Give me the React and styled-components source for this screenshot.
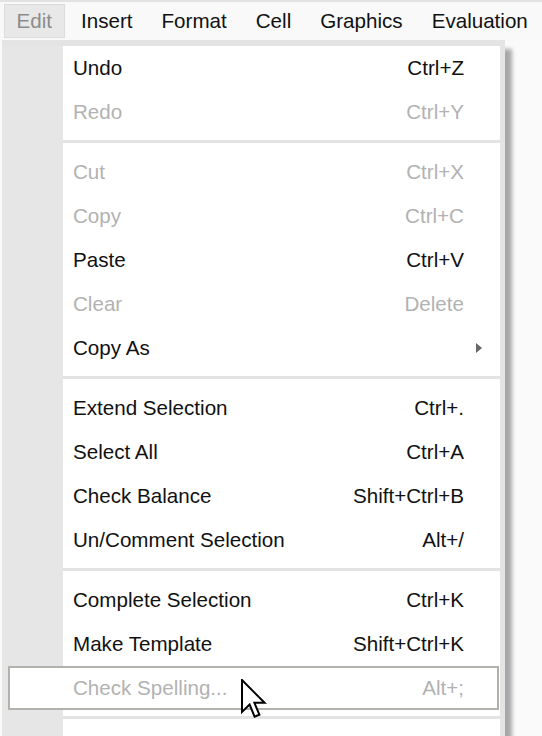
import React from "react";
import styled, { createGlobalStyle } from "styled-components";

// ========== DATA ===========
const menus = ["Edit", "Insert", "Format", "Cell", "Graphics", "Evaluation"];

const groups = [
  [
    { label: "Undo", key: "Ctrl+Z" },
    { label: "Redo", key: "Ctrl+Y", disabled: true }
  ],
  [
    { label: "Cut", key: "Ctrl+X", disabled: true },
    { label: "Copy", key: "Ctrl+C", disabled: true },
    { label: "Paste", key: "Ctrl+V" },
    { label: "Clear", key: "Delete", disabled: true },
    { label: "Copy As", submenu: true }
  ],
  [
    { label: "Extend Selection", key: "Ctrl+." },
    { label: "Select All", key: "Ctrl+A" },
    { label: "Check Balance", key: "Shift+Ctrl+B" },
    { label: "Un/Comment Selection", key: "Alt+/" }
  ],
  [
    { label: "Complete Selection", key: "Ctrl+K" },
    { label: "Make Template", key: "Shift+Ctrl+K" },
    { label: "Check Spelling...", key: "Alt+;", disabled: true, active: true }
  ]
];

// ========== STYLED COMPONENTS ===========
const GlobalStyle = createGlobalStyle`
  html, body {
    margin: 0;
    height: 100%;
    overflow: hidden;
    background: #fafafa;
  }
  body {
    font-family: "Liberation Sans", Arial, sans-serif;
  }
`;

const Page = styled.div`
  position: relative;
  height: 736px;
  overflow: hidden;
`;

const MenuBar = styled.div`
  display: flex;
  gap: 4px;
  height: 38px;
  padding-left: 4px;
  border-top: 2px solid #e2e2e2;
  background: #f9f9f9;
`;

const MenuTitle = styled.div`
  display: flex;
  align-items: center;
  height: 34px;
  margin-top: 2px;
  padding: 0 11.5px;
  box-sizing: border-box;
  font-size: 20.6px;
  color: ${({ $open }) => ($open ? "#8c8c8c" : "#111")};
  background: ${({ $open }) => ($open ? "#e8e8e8" : "transparent")};
  border: 1px solid ${({ $open }) => ($open ? "#dcdcdc" : "transparent")};
`;

const Dropdown = styled.div`
  width: 503px;
  margin-left: 2px;
  box-sizing: border-box;
  border-top: 6px solid #e4e4e4;
  border-right: 5px solid #e4e4e4;
  background: linear-gradient(to right, #e6e6e6 61px, #fff 61px);
  box-shadow: 7px 9px 4px rgba(0, 0, 0, 0.33);
`;

const Item = styled.div`
  display: flex;
  align-items: center;
  height: 44px;
  box-sizing: border-box;
  font-size: 20.6px;
  color: ${({ $disabled }) => ($disabled ? "#b2b2b2" : "#111")};
  padding-left: ${({ $active }) => ($active ? 63 : 71)}px;
  margin: ${({ $active }) => ($active ? "0 1px 0 6px" : "0")};
  border: ${({ $active }) => ($active ? "2px solid #b2b2ac" : "none")};
  background: ${({ $active }) => ($active ? "#fff" : "transparent")};
`;

const Label = styled.span`
  flex: 1;
  white-space: nowrap;
`;

const Shortcut = styled.span`
  white-space: nowrap;
`;

const EndCell = styled.span`
  display: flex;
  align-items: center;
  width: ${({ $active }) => ($active ? 33 : 36)}px;
  padding-left: 12px;
  box-sizing: border-box;
`;

const Separator = styled.div`
  height: 3px;
  margin: 6px 0 7px 61px;
  background: #e3e3e3;
`;

const Filler = styled.div`
  height: 44px;
`;

const Cursor = styled.svg`
  position: absolute;
  left: 241px;
  top: 679px;
`;

// ========== COMPONENT ===========
const SubmenuArrow = () => (
  <svg width="6" height="10" viewBox="0 0 6 10">
    <path d="M0 0 L6 5 L0 10 Z" fill="#666" />
  </svg>
);

const App = () => {
  return (
    <>
      <GlobalStyle />
      <Page>
        <MenuBar>
          {menus.map((m, i) => (
            <MenuTitle key={m} $open={i === 0}>
              {m}
            </MenuTitle>
          ))}
        </MenuBar>

        <Dropdown>
          {groups.map((group, gi) => (
            <React.Fragment key={gi}>
              {gi > 0 && <Separator />}
              {group.map((item) => (
                <Item
                  key={item.label}
                  $disabled={item.disabled}
                  $active={item.active}
                >
                  <Label>{item.label}</Label>
                  {item.key && <Shortcut>{item.key}</Shortcut>}
                  <EndCell $active={item.active}>
                    {item.submenu && <SubmenuArrow />}
                  </EndCell>
                </Item>
              ))}
            </React.Fragment>
          ))}
          <Separator />
          <Filler />
        </Dropdown>

        <Cursor width="26" height="40" viewBox="0 0 13 20">
          <path
            d="M0.5 0.5 L0.5 16.5 L4.3 12.8 L6.8 18.8 L9.2 17.8 L6.7 11.9 L11.8 11.9 Z"
            fill="#fff"
            stroke="#000"
            strokeWidth="1"
            strokeLinejoin="miter"
          />
        </Cursor>
      </Page>
    </>
  );
};

export default App;
